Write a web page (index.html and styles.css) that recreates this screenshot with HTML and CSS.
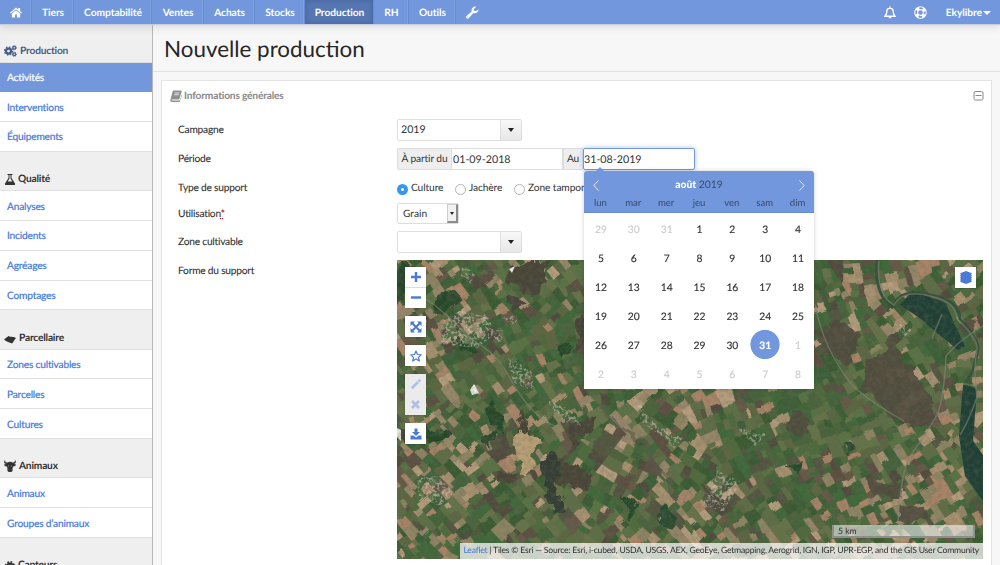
FILE: index.html
```html
<!DOCTYPE html>
<html lang="fr">
<head>
<meta charset="utf-8">
<title>Nouvelle production</title>
<link rel="stylesheet" href="styles.css">
</head>
<body>
<header class="topbar">
  <nav class="nav">
    <a class="nav-item nav-home"><svg class="ic" width="12" height="11" viewBox="0 0 26 24"><path fill="#fff" d="M13 1 0 12.500l1.500 2L13 5l11.500 9.500 1.500-2-4-3.500V2h-4v3.500zM13 7 4 14.500V23h7v-6.500h4V23h7v-8.500z"/></svg></a>
    <a class="nav-item nav-tiers">Tiers</a>
    <a class="nav-item nav-compta">Comptabilité</a>
    <a class="nav-item nav-ventes">Ventes</a>
    <a class="nav-item nav-achats">Achats</a>
    <a class="nav-item nav-stocks">Stocks</a>
    <a class="nav-item nav-production active">Production</a>
    <a class="nav-item nav-rh">RH</a>
    <a class="nav-item nav-outils">Outils</a>
    <a class="nav-item nav-wrench"><svg class="ic" width="13" height="13" viewBox="0 0 24 24"><path fill="#fff" d="M23 6a7 7 0 0 1-9.500 7L5 22.500a2.600 2.600 0 0 1-4-4L10.500 10A7 7 0 0 1 19 1.200L15 5v4h4z"/><circle cx="3.500" cy="20.500" r="1" fill="#7297dc"/></svg></a>
  </nav>
  <div class="tools">
    <svg class="ic bell" width="12" height="13" viewBox="0 0 24 26"><path fill="none" stroke="#fff" stroke-width="2.800" d="M12 1v3M2 20.500h20c-4-4-3-7-4-12-1-5-11-5-12 0-1 5 0 8-4 12z"/><path fill="#fff" d="M9 21h6c0 5-6 5-6 0z"/></svg>
    <svg class="ic buoy" width="13" height="13" viewBox="0 0 26 26"><circle cx="13" cy="13" r="8.600" fill="none" stroke="#fff" stroke-width="8"/><circle cx="13" cy="13" r="8.600" fill="none" stroke="#7297dc" stroke-width="3.600" stroke-dasharray="7 6.500" stroke-dashoffset="3.500"/></svg>
    <span class="user">Ekylibre<i class="caret-w"></i></span>
  </div>
</header>
<div class="body">
  <aside class="side">
    <h2 class="side-h first"><svg class="ic" width="13" height="12" viewBox="0 0 26 24"><g fill="none" stroke="#465c88"><circle cx="9" cy="12" r="5" stroke-width="4.500"/><circle cx="9" cy="12" r="8" stroke-width="2.600" stroke-dasharray="3.200 3.080"/><circle cx="20.500" cy="5.500" r="2.800" stroke-width="2.600"/><circle cx="20.500" cy="5.500" r="4.500" stroke-width="1.600" stroke-dasharray="1.800 1.730"/><circle cx="20.500" cy="18.500" r="2.800" stroke-width="2.600"/><circle cx="20.500" cy="18.500" r="4.500" stroke-width="1.600" stroke-dasharray="1.800 1.730"/></g></svg>Production</h2>
    <a class="side-a on">Activités</a><a class="side-a">Interventions</a><a class="side-a">Équipements</a>
    <h2 class="side-h flask"><svg class="ic" width="10" height="11" viewBox="0 0 20 22"><path fill="#333" d="M5 0h10v2h-2v6l7 11c1 2 0 3-2 3H2c-2 0-3-1-2-3L7 8V2H5zM9 2v7l-3.500 6h9L11 9V2z"/></svg>Qualité</h2>
    <a class="side-a">Analyses</a><a class="side-a">Incidents</a><a class="side-a">Agréages</a><a class="side-a">Comptages</a>
    <h2 class="side-h"><svg class="ic" width="12" height="9" viewBox="0 0 24 18"><path fill="#333" d="M0 9 9 2c5 3 9 0 15 4-3 3-4 7-8 11-5-2-11-3-16-8z"/></svg>Parcellaire</h2>
    <a class="side-a">Zones cultivables</a><a class="side-a">Parcelles</a><a class="side-a">Cultures</a>
    <h2 class="side-h"><svg class="ic" width="12" height="12" viewBox="0 0 24 24"><path fill="#333" d="M2 0c0 4 2 5 5 5 3-2 7-2 10 0 3 0 5-1 5-5 3 4 2 7-2 8l4 1c-1 3-3 4-6 4l-1 5c1 4-1 6-5 6s-6-2-5-6l-1-5c-3 0-5-1-6-4l4-1C0 7-1 4 2 0z"/><path fill="#999" d="M8 11h2v2H8zM14 11h2v2h-2zM9 19h1v1H9zM14 19h1v1h-1z"/></svg>Animaux</h2>
    <a class="side-a">Animaux</a><a class="side-a">Groupes d’animaux</a>
    <h2 class="side-h flask"><svg class="ic" width="10" height="10" viewBox="0 0 20 20"><circle cx="10" cy="10" r="5" fill="none" stroke="#333" stroke-width="4.500"/><circle cx="10" cy="10" r="8.400" fill="none" stroke="#333" stroke-width="3" stroke-dasharray="3.600 3"/></svg>Capteurs</h2>
  </aside>
  <main class="main">
    <h1 class="title">Nouvelle production</h1>
    <section class="panel">
      <div class="panel-h">
        <svg class="ic" width="12" height="12" viewBox="0 0 24 24"><path fill="#8f8f8f" d="M8 1h13c2 0 3 1 2 3l-4 13c0 1-1 2-3 2H4c-1 0-1 1 0 2h13c2 0 3-1 3-2l4-12c0 5-3 11-4 15-1 2-2 2-3 2H4c-3 0-4-2-3-5L5 4c0-2 1-3 3-3z"/><path stroke="#fff" stroke-width="1.500" d="M9.500 6h9M8.500 9.500h9"/></svg>
        <span class="panel-t">Informations générales</span>
        <svg class="ic" width="11" height="11" viewBox="0 0 11 11"><rect x="1" y="1.500" width="9" height="8.500" rx="1.500" fill="none" stroke="#888"/><path stroke="#888" d="M2.500 5.500h6"/></svg>
      </div>
      <div class="form">
        <label class="lab">Campagne</label>
        <div class="combo"><span class="combo-v">2019</span><span class="combo-b"><i class="caret"></i></span></div>
        <label class="lab">Période</label>
        <div class="period"><span class="addon from">À partir du</span><span class="date">01-09-2018</span><span class="addon to">Au</span><span class="date focus">31-08-2019</span>
          <div class="picker">
            <div class="picker-h">
              <div class="month"><svg width="6" height="11" viewBox="0 0 6 11"><path fill="none" stroke="#e3ebfa" d="M5.500.5.800 5.500l4.700 5"/></svg><span><b>août</b> 2019</span><svg width="6" height="11" viewBox="0 0 6 11"><path fill="none" stroke="#e3ebfa" d="M.5.500l4.700 5-4.700 5"/></svg></div>
              <div class="week"><span>lun</span><span>mar</span><span>mer</span><span>jeu</span><span>ven</span><span>sam</span><span>dim</span></div>
            </div>
            <div class="days">
              <i>29</i><i>30</i><i>31</i><span>1</span><span>2</span><span>3</span><span>4</span>
              <span>5</span><span>6</span><span>7</span><span>8</span><span>9</span><span>10</span><span>11</span>
              <span>12</span><span>13</span><span>14</span><span>15</span><span>16</span><span>17</span><span>18</span>
              <span>19</span><span>20</span><span>21</span><span>22</span><span>23</span><span>24</span><span>25</span>
              <span>26</span><span>27</span><span>28</span><span>29</span><span>30</span><span class="sel">31</span><i>1</i>
              <i>2</i><i>3</i><i>4</i><i>5</i><i>6</i><i>7</i><i>8</i>
            </div>
          </div>
        </div>
        <label class="lab">Type de support</label>
        <div class="radios"><span class="radio r1"><i class="dot checked"></i>Culture</span><span class="radio r2"><i class="dot"></i>Jachère</span><span class="radio"><i class="dot"></i>Zone tampon</span></div>
        <label class="lab">Utilisation<abbr class="req" title="obligatoire">*</abbr></label>
        <div class="select"><span class="select-v">Grain</span><span class="select-b"><i class="caret small"></i></span></div>
        <label class="lab">Zone cultivable</label>
        <div class="combo"><span class="combo-v"></span><span class="combo-b"><i class="caret"></i></span></div>
        <label class="lab">Forme du support</label>
        <div class="map">
          <svg class="ground" id="ground" width="586" height="299" viewBox="0 0 586 299">
            <defs>
              <filter id="rough" x="0" y="0" width="100%" height="100%"><feTurbulence type="fractalNoise" baseFrequency=".09" numOctaves="2" seed="4" result="n"/><feDisplacementMap in="SourceGraphic" in2="n" scale="5"/><feGaussianBlur stdDeviation=".5"/></filter>
              <filter id="ragged" x="-20%" y="-20%" width="140%" height="140%"><feTurbulence type="fractalNoise" baseFrequency=".07" numOctaves="3" seed="9" result="n"/><feDisplacementMap in="SourceGraphic" in2="n" scale="16" xChannelSelector="R" yChannelSelector="G"/><feGaussianBlur stdDeviation=".5"/></filter>
              <filter id="grain" x="0" y="0" width="100%" height="100%"><feTurbulence type="fractalNoise" baseFrequency=".22" numOctaves="3" seed="7"/><feColorMatrix values="0 0 0 0 .12  0 0 0 0 .16  0 0 0 0 .1  1.600 0 0 0 -.6"/></filter>
              <filter id="town" x="0" y="0" width="100%" height="100%"><feTurbulence type="fractalNoise" baseFrequency=".35" numOctaves="2" seed="3" result="n"/><feColorMatrix in="n" values="0 0 0 0 .6  0 0 0 0 .6  0 0 0 0 .54  5 0 0 0 -2.300" result="s"/><feComposite in="s" in2="SourceGraphic" operator="in"/></filter>
            </defs>
            <rect width="586" height="299" fill="#4c6039"/>
            <g id="fields" filter="url(#rough)"></g>
            <g filter="url(#ragged)">
              <g fill="#494539">
                <path d="M112 3h38v22l-12 8-28-9zM125 152l17 36-24-8zM170 163l30-8-10 18-14 18zM162 199l35 15-8 18-28-8zM134 0h20l-8 20zM184 50l8 22-10 22-4-20z"/>
                <path d="M100 212l16 2-2 10-14-3zM0 168l16 4-6 12-12-2zM110 34l20 10-14 8z"/>
              </g>
              <g fill="#524b3e" opacity=".9">
                <path d="M421 70l33-4 10 12-14 25-22-8zM470 98l28-12 18 24 18 30 2 26-32-2-36-32z"/>
                <path d="M472 222l35 3-5 13-28-2zM504 247l22-2 8 14-30 5zM398 150l18 12-12 16-14-8zM565 58l18 4-10 14-14-6zM308 226l16 10-14 10z"/>
              </g>
              <g fill="#24462a" opacity=".92">
                <path d="M34 38l24-7 6 7-16 18-14-9zM0 0h10l4 30-8 12-8-5zM52 80l22 5 8 10-16-3zM96 140l13 34-8-7-14-18zM22 168l24 3 9 7-24 4zM160 82l18 5-12 12zM84 176l14-7 5 5-12 12z"/>
                <path d="M268 246l14 12-10 12-12-12zM224 236l16 8-8 14zM388 206l18-4-4 12zM446 180l16 6-10 10z"/>
              </g>
              <path fill="#b99f76" d="M115 177l16-5 12 10-8 9 3 16-9 11-8-3 5-12-10-9z"/>
              <path fill="#353c34" d="M144 204l16-10 5 20-7 9 10 26-11 3-8-18z"/>
            </g>
            <g filter="url(#town)" opacity=".55"><path d="M44 62l20-12 28 8 6 16-18 14-36-4zM104 58l20-4-7 11zM65 7l14 5-5 12-10-8zM20 218l20-2 18 18-16 12-20-10zM262 168l24 10-10 12zM320 210l24 12-18 30-20-8zM340 168l30 6-12 12zM494 60l22 10-8 6zM110 96l24 14 4 22-22-10zM150 140l24 10 10 16-20-4zM88 70l20 0-4 14zM240 140l14 20 22 14-6 6-26-18z"/></g>
            <path fill="none" stroke="#5d564c" stroke-width="5" opacity=".6" filter="url(#ragged)" d="M202 142q10 20 22 25t26 17q4 20 14 30t14 22"/>
            <path fill="#203f35" d="M503 45l12-14 34 12 8 20 11 23-7 4-21-17-16-14zM566 125q8 0 14 5l-4 51 10 14v46l-18-25-6-40z"/>
            <g fill="none" stroke="#35513c" stroke-width="3"><path d="M480 0q-3 34 15 47 9-20 38-12 29 5 30 24 18 19 18 30-3 20-12 34"/></g>
            <g fill="none" stroke="#85887a" stroke-width="1.400" opacity=".6"><path d="M418 44q8 45 38 82 16 15 51 35"/><path d="M586 66q-25 15-37 30-2 40-8 57-10 18-25 39-12 15-15 70M545 54l-10 24"/><path d="M482 1q-3 34 15 44 9-16 36-9 26 5 27 23 21 19 20 30-4 20 0 48-8 24-17 38"/><path d="M22 34q30 20 50 44 30 16 42 42 24 42 50 48"/></g>
            <path fill="#fff" d="M73 130l4-6 5 9-7 2zM112 9l6-3-3 7zM0 168l4 2v11l-4-4z" opacity=".85"/>
            <rect width="586" height="299" filter="url(#grain)" opacity=".45"/>
          </svg>
          <div class="ctrls">
            <div class="cbox pair"><span><svg width="10" height="10"><path stroke="#4a7ad9" stroke-width="2.400" d="M5 0v10M0 5h10"/></svg></span><span><svg width="10" height="10"><path stroke="#4a7ad9" stroke-width="2.400" d="M0 4.500h10"/></svg></span></div>
            <div class="cbox"><svg width="12" height="12" viewBox="0 0 12 12"><path stroke="#4a7ad9" stroke-width="2" d="M2 2l8 8M10 2l-8 8"/><path fill="#4a7ad9" d="M.5.500H5L.5 5zM7 .5h4.500V5zM.5 7v4.500H5zM11.500 7v4.500H7z"/></svg></div>
            <div class="cbox"><svg width="12" height="12" viewBox="0 0 24 24"><path fill="none" stroke="#4a7ad9" stroke-width="2.400" stroke-linejoin="round" d="M12 2l3 7 7.500.7-5.700 5 1.800 7.300L12 18l-6.600 4 1.800-7.300-5.700-5L9 9z"/></svg></div>
            <div class="cbox pair off"><span><svg width="10" height="10" viewBox="0 0 10 10"><path stroke="#aebfe8" stroke-width="2.600" d="M.8 9.200 7 3"/><path stroke="#aebfe8" stroke-width="2.600" d="M7.500 2.500 9.200.8"/></svg></span><span><svg width="9" height="9"><path stroke="#aebfe8" stroke-width="2.800" d="M1 1l7 7M8 1 1 8"/></svg></span></div>
            <div class="cbox"><svg width="12" height="12" viewBox="0 0 12 12"><path fill="#4a7ad9" d="M4.500.5h3V4H10L6 8 2 4h2.500zM.5 7.500h3L6 9.500l2.500-2h3v4H.5z"/></svg></div>
          </div>
          <div class="cbox layers"><svg width="12" height="13" viewBox="0 0 12 13"><path fill="#4a7ad9" d="M6 0l6 2.300-1 1 1 1.200-1 1 1 1.200-1 1 1 1.200-1 1 1 .8L6 13l-6-2.300 1-.8-1-1 1-1.200-1-1 1-1.200-1-1 1-1.200-1-1z"/></svg></div>
          <div class="scale">5 km</div>
          <div class="attr"><a>Leaflet</a> | Tiles © Esri — Source: Esri, i-cubed, USDA, USGS, AEX, GeoEye, Getmapping, Aerogrid, IGN, IGP, UPR-EGP, and the GIS User Community</div>
        </div>
      </div>
    </section>
  </main>
</div>
<script src="fields.js"></script>
</body>
</html>
```
FILE: styles.css
```css
* { box-sizing: border-box; }
body { margin: 0; height: 565px; overflow: hidden; background: #f7f7f7; font: 10.2px/14px Lato, sans-serif; color: #333; text-rendering: geometricPrecision; }
.ic { display: block; flex: none; }
.topbar { display: flex; justify-content: space-between; height: 24px; background: #7297dc; color: #fff; font-weight: 700; position: relative; box-shadow: 0 1px 1px #c9cede, 0 3px 9px rgba(0,0,0,.12); z-index: 2; }
.nav { display: flex; }
.nav-item { display: flex; align-items: center; justify-content: center; height: 24px; border-right: 1px solid #668bd0; box-shadow: inset -1px 0 #7ea1e2; padding: 1px 0 0 1px; letter-spacing: -.05px; }
.nav-home { width: 32px; }
.nav-tiers { width: 42px; }
.nav-compta { width: 78px; }
.nav-ventes { width: 52px; }
.nav-achats { width: 51px; }
.nav-stocks { width: 50px; }
.nav-production { width: 69px; }
.nav-rh { width: 35px; }
.nav-outils { width: 47px; }
.nav-wrench { width: 33px; border: 0; box-shadow: none; padding-right: 2px; }
.nav-item.active { background: #5777b2; box-shadow: inset 0 0 6px #46639b; }
.tools { display: flex; align-items: center; padding: 1px 9px 0 0; }
.bell { margin-right: 18px; }
.buoy { margin-right: 19px; }
.user { display: flex; align-items: center; letter-spacing: -.05px; }
.caret-w { border: 4px solid transparent; border-top-color: #fff; border-bottom: 0; margin-left: 1px; }
.body { display: flex; height: 541px; }
.side { width: 153px; flex: none; background: #efefef; border-right: 1px solid #b9b9b9; overflow: hidden; }
.side-h { display: flex; align-items: flex-end; gap: 3px; height: 39.3px; margin: 0; padding: 0 0 4px 4px; font-size: 10.2px; line-height: 14px; letter-spacing: -.2px; font-weight: 700; color: #333; border-bottom: 1px solid #e0e0e0; }
.side-h .ic { margin-bottom: 1px; }
.side-h.first { height: 38.5px; color: #465c88; }
.side-h.flask { padding-left: 5px; }
.side-a { display: flex; align-items: center; height: 29.8px; padding: 2px 0 0 7px; background: #fff; border-bottom: 1px solid #e0e0e0; color: #4479dc; letter-spacing: -.2px; -webkit-text-stroke: .2px; }
.side-a.on { background: #7297dc; color: #fff; border-color: #7297dc; }
.main { flex: 1; min-width: 0; padding-right: 8px; }
.title { margin: 0 -8px 8px 0; height: 48px; padding: 0 11px; border-bottom: 1px solid #e3e3e3; font-size: 22.4px; line-height: 49px; font-weight: 400; color: #262626; }
.panel { margin-left: 8px; height: 500px; background: #fff; border: 1px solid #e3e3e3; }
.panel-h { display: flex; align-items: center; gap: 2px; height: 30px; padding: 0 7px 0 8px; color: #888; font-weight: 700; letter-spacing: -.18px; }
.panel-h .ic:last-child { margin-bottom: 2px; }
.panel-t { flex: 1; padding-bottom: 1px; }
.form { display: grid; grid-template-columns: 219px 586px; grid-template-rows: 29px 29px 26px 28px 29px 299px; padding: 8px 0 0 16px; }
.lab { line-height: 23px; letter-spacing: -.22px; -webkit-text-stroke: .1px; }
.req { color: #d00; text-decoration: underline dotted; }
.combo { display: flex; width: 125px; height: 22px; border: 1px solid #dedede; border-radius: 2px; }
.combo-v { flex: 1; padding-left: 3px; line-height: 21px; font-size: 10.600px; }
.combo-b { width: 21px; display: flex; align-items: center; justify-content: center; background: linear-gradient(#f8f8f8, #e7e7e7); border-left: 1px solid #ddd; }
.caret { border: 3.5px solid transparent; border-top: 4px solid #222; border-bottom: 0; }
.caret.small { border-width: 3px 2.5px 0; }
.period { display: flex; height: 22px; line-height: 22px; position: relative; font-size: 10.7px; }
.addon { background: #eee; border: 1px solid #ddd; line-height: 21px; text-align: center; font-size: 10.2px; letter-spacing: -.1px; }
.from { width: 55px; border-radius: 2px 0 0 2px; }
.to { width: 20px; }
.date { width: 111px; border: 1px solid #ddd; border-left: 0; line-height: 21px; padding-left: 1px; }
.date.focus { width: 112px; border: 1px solid #7297dc; border-radius: 2px; box-shadow: 0 0 5px #a9c1ef; padding: 0; }
.picker { position: absolute; left: 187px; top: 23px; width: 230px; height: 218px; background: #fff; z-index: 5; border-radius: 3px 3px 0 0; box-shadow: 0 0 4px rgba(0,0,0,.2); font-size: 10.3px; }
.picker::before { content: ""; position: absolute; left: 12px; top: -4px; border: 4px solid transparent; border-top: 0; border-bottom-color: #7297dc; }
.picker-h { height: 42px; background: #7297dc; border-bottom: 1px solid #668bd5; border-radius: 3px 3px 0 0; padding-top: 5px; color: #3a4a6b; }
.month { display: flex; justify-content: space-between; padding: 0 9px; line-height: 18px; align-items: center; }
.month b { color: #fff; font-weight: 900; }
.week { display: grid; grid-template-columns: repeat(7, 1fr); text-align: center; line-height: 20px; font-size: 9.6px; }
.days { display: grid; grid-template-columns: repeat(7, 1fr); grid-auto-rows: 29.1px; padding-top: 1px; text-align: center; line-height: 32px; color: #333; -webkit-text-stroke: .15px; }
.days span, .days i { font-style: normal; padding-left: 1px; }
.days i { color: #ccc; }
.days .sel { background: radial-gradient(circle 15px at 17px 14.500px, #7297dc 14.200px, transparent 15px); color: #fff; font-weight: 700; }
.radios { display: flex; height: 22px; align-items: center; letter-spacing: -.1px; }
.radio { display: flex; align-items: center; gap: 3px; white-space: nowrap; }
.r1 { width: 58px; }
.r2 { width: 59px; }
.dot { width: 11px; height: 11px; border: 1px solid #b5b5b5; border-radius: 50%; margin-top: 2px; background: #fff; }
.dot.checked { border: 4px solid #3797f0; }
.select { display: flex; width: 62px; height: 21px; border: 1px solid #ddd; border-radius: 2px; }
.select-v { flex: 1; padding-left: 5px; line-height: 20px; }
.select-b { width: 11px; display: flex; align-items: center; justify-content: center; background: #f1f1f1; border: 1px solid #ccc; border-right: 2px solid #8c8c8c; border-bottom: 2px solid #8c8c8c; }
.map { position: relative; width: 586px; height: 299px; overflow: hidden; background: #4c6039; }
.ground { display: block; }
.ctrls { position: absolute; left: 8px; top: 7px; display: flex; flex-direction: column; gap: 8px; }
.cbox { width: 21px; min-height: 21px; background: #fff; display: flex; align-items: center; justify-content: center; box-shadow: 0 0 1px rgba(0,0,0,.3); }
.pair { flex-direction: column; height: 41px; }
.pair span { flex: 1; width: 21px; display: flex; align-items: center; justify-content: center; }
.pair span:first-child { border-bottom: 1px solid #ddd; }
.pair.off { background: #ebebeb; }
.pair.off span { border: 0; }
.layers { position: absolute; right: 7px; top: 7px; }
.scale { position: absolute; right: 8px; bottom: 21px; width: 143px; height: 13px; padding-left: 4px; border: 2px solid #8d8f8d; border-top: 0; background: rgba(255,255,255,.55); font-size: 8.6px; line-height: 13px; }
.attr { position: absolute; right: 0; bottom: 0; height: 16px; padding: 0 4px 0 3px; background: rgba(255,255,255,.72); font-size: 8.6px; line-height: 15px; letter-spacing: -.215px; white-space: nowrap; }
.attr a { color: #4479dc; }
```
FILE: fields.js
```js
// Draws the patchwork of farm parcels under the map controls.
(function () {
  var seed = 2019;
  function rnd() {
    seed = (seed * 1664525 + 1013904223) % 4294967296;
    return seed / 4294967296;
  }
  var greens = ['#506a3d', '#44633a', '#5a7245', '#3a5a33', '#667349', '#40683b', '#4c633c', '#5f6d46', '#3c5f37', '#5b6642'];
  var tans = ['#a8906f', '#b69c7d', '#98866a', '#a98467', '#8e8463'];
  var browns = ['#5b5042', '#514b3e', '#665846', '#53543f'];
  var out = [];

  function area(p) {
    var s = 0;
    p.forEach(function (a, i) {
      var b = p[(i + 1) % p.length];
      s += a[0] * b[1] - b[0] * a[1];
    });
    return Math.abs(s) / 2;
  }
  function cut(p, c, nx, ny) {
    var l = [], r = [];
    p.forEach(function (a, i) {
      var b = p[(i + 1) % p.length];
      var da = a[0] * nx + a[1] * ny - c;
      var db = b[0] * nx + b[1] * ny - c;
      (da >= 0 ? l : r).push(a);
      if (da * db < 0) {
        var t = da / (da - db);
        var q = [a[0] + t * (b[0] - a[0]), a[1] + t * (b[1] - a[1])];
        l.push(q);
        r.push(q);
      }
    });
    return [l, r];
  }
  function extent(p, nx, ny) {
    var v = p.map(function (a) { return a[0] * nx + a[1] * ny; });
    return [Math.min.apply(null, v), Math.max.apply(null, v)];
  }
  function pick(list) { return list[Math.floor(rnd() * list.length)]; }
  function paint(p) {
    var x = p[0][0], y = p[0][1];
    var tan = 0.23 + 0.1 * Math.sin(x / 40 + 1) + 0.1 * Math.sin(y / 32 + x / 70);
    if (x > 400 && y < 200) tan -= 0.1;
    var k = rnd();
    var c = k < tan ? pick(tans) : k < tan + 0.12 ? pick(browns) : pick(greens);
    out.push('<polygon fill="' + c + '" stroke="' + c + '" stroke-width=".4" points="' + p.map(function (q) {
      return q[0].toFixed(1) + ',' + q[1].toFixed(1);
    }).join(' ') + '"/>');
  }
  // Each block keeps its own axis, so parcels stay close to rectangles.
  function split(p, angle, depth) {
    if (p.length < 3) return;
    if (area(p) < 45 + rnd() * rnd() * 330 || depth > 18) { paint(p); return; }
    if (depth < 8) angle += (rnd() - 0.5) * 0.35;
    var t = angle + (rnd() - 0.5) * 0.12;
    var ux = Math.cos(t), uy = Math.sin(t);
    var a = extent(p, ux, uy), b = extent(p, -uy, ux);
    var bias = rnd() < 0.5 ? 1.25 : 0.8;
    var along = (a[1] - a[0]) * bias > b[1] - b[0];
    var e = along ? a : b;
    var c = e[0] + (e[1] - e[0]) * (0.36 + rnd() * 0.28);
    cut(p, c, along ? ux : -uy, along ? uy : ux).forEach(function (q) { split(q, angle, depth + 1); });
  }
  split([[-20, -20], [606, -20], [606, 319], [-20, 319]], -0.6, 0);
  document.getElementById('fields').innerHTML = out.join('');
})();
```
